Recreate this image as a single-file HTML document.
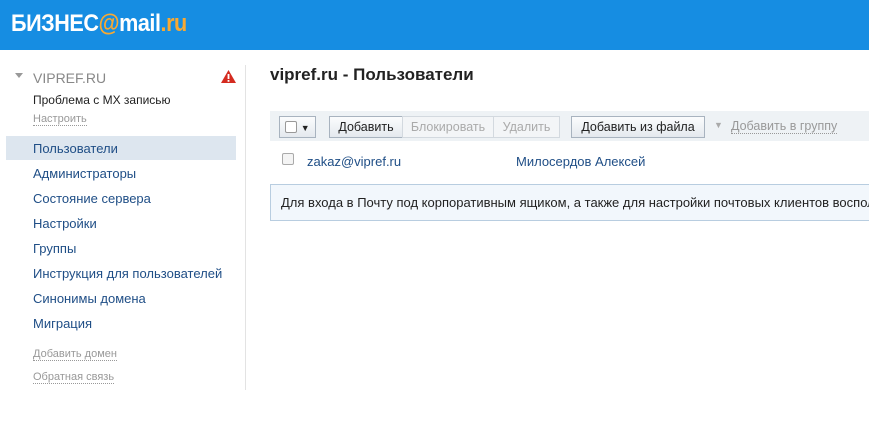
<!DOCTYPE html>
<html><head><meta charset="utf-8"><style>
*{margin:0;padding:0;box-sizing:border-box}
body{width:869px;height:436px;overflow:hidden;background:#fff;font-family:"Liberation Sans",Arial,sans-serif;font-size:13px;color:#333;position:relative}
.hdr{position:absolute;left:0;top:0;width:869px;height:50px;background:#168de2}
.logo{position:absolute;left:11px;top:10px;font-size:24px;font-weight:bold;color:#fff;letter-spacing:-0.5px;transform:scaleX(0.9);transform-origin:0 0;white-space:nowrap}
.logo b{color:#f8a932}
.abs{position:absolute;white-space:nowrap}
.side{position:absolute;left:245px;top:65px;width:1px;height:325px;background:#e3e3e3}
.nav{position:absolute;left:33px;color:#1f4e86;font-size:13px}
.sel{position:absolute;left:6px;top:136px;width:230px;height:24px;background:#dde6ef}
.dot{border-bottom:1px dotted #999;color:#999;font-size:11px}
.tb{position:absolute;left:270px;top:111px;width:599px;height:30px;background:#eef2f5}
.btn{position:absolute;top:5px;height:22px;border:1px solid #a8b3bf;background:linear-gradient(#fbfcfd,#e4e9ee);font-size:12.5px;line-height:20px;text-align:center;color:#222}
.dis{color:#aaa;border-color:#d3d9df;background:#f3f5f7}
.info{position:absolute;left:270px;top:184px;width:620px;height:37px;border:1px solid #b8cde0;background:#f2f7fc;font-size:13px;line-height:35px;padding-left:10px;color:#222;white-space:nowrap;overflow:hidden}
</style></head><body>
<div class="hdr"><div class="logo">БИЗНЕС<b>@</b>mail<b>.ru</b></div></div>
<div class="abs" style="left:15px;top:73px;width:0;height:0;border-left:4px solid transparent;border-right:4px solid transparent;border-top:5px solid #999"></div>
<div class="abs" style="left:33px;top:70px;font-size:14px;color:#888">VIPREF.RU</div>
<svg class="abs" style="left:220px;top:69px" width="17" height="15"><path d="M8.5 1L16 14H1Z" fill="#d42b20"/><rect x="7.6" y="5" width="1.8" height="5" fill="#fff"/><rect x="7.6" y="11" width="1.8" height="1.8" fill="#fff"/></svg>
<div class="abs" style="left:33px;top:93px;font-size:12px;color:#222">Проблема с MX записью</div>
<div class="abs dot" style="left:33px;top:113px">Настроить</div>
<div class="sel"></div>
<div class="nav" style="top:141px">Пользователи</div>
<div class="nav" style="top:166px">Администраторы</div>
<div class="nav" style="top:191px">Состояние сервера</div>
<div class="nav" style="top:216px">Настройки</div>
<div class="nav" style="top:241px">Группы</div>
<div class="nav" style="top:266px">Инструкция для пользователей</div>
<div class="nav" style="top:291px">Синонимы домена</div>
<div class="nav" style="top:316px">Миграция</div>
<div class="abs dot" style="left:33px;top:348px">Добавить домен</div>
<div class="abs dot" style="left:33px;top:371px">Обратная связь</div>
<div class="side"></div>
<div class="abs" style="left:270px;top:65px;font-size:17px;font-weight:bold;color:#222">vipref.ru - Пользователи</div>
<div class="tb">
<div class="btn" style="left:9px;width:37px"><span style="display:inline-block;width:12px;height:12px;border:1px solid #999;border-radius:2px;background:#fff;vertical-align:-2px"></span> <span style="font-size:9px">▼</span></div>
<div class="btn" style="left:59px;width:74px">Добавить</div>
<div class="btn dis" style="left:132px;width:92px">Блокировать</div>
<div class="btn dis" style="left:223px;width:67px">Удалить</div>
<div class="btn" style="left:301px;width:134px">Добавить из файла</div>
<div class="abs" style="left:444px;top:9px;font-size:9px;color:#aaa">▼</div>
<div class="abs dot" style="left:461px;top:8px;font-size:12.5px">Добавить в группу</div>
</div>
<div class="abs" style="left:282px;top:153px;width:12px;height:12px;border:1px solid #aaa;border-radius:2px;background:#f4f4f4"></div>
<div class="abs" style="left:307px;top:154px;color:#1f4e86">zakaz@vipref.ru</div>
<div class="abs" style="left:516px;top:154px;color:#1f4e86">Милосердов Алексей</div>
<div class="info">Для входа в Почту под корпоративным ящиком, а также для настройки почтовых клиентов воспользуйтесь</div>
</body></html>
